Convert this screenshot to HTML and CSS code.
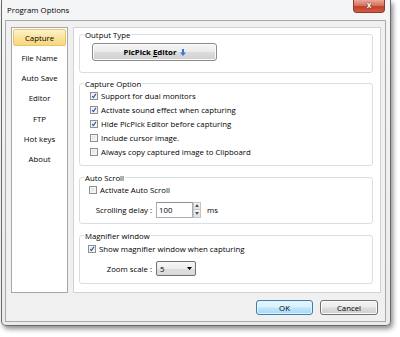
FILE: index.html
```html
<!DOCTYPE html>
<html>
<head>
<meta charset="utf-8">
<link rel="stylesheet" href="styles.css">
</head>
<body>
<div class="window">
  <div class="titlebar">
    <span class="title">Program Options</span>
    <div class="close"><span class="close-x">x</span></div>
  </div>
  <div class="client">
    <div class="main">
      <ul class="nav">
        <li class="nav-item active">Capture</li>
        <li class="nav-item">File Name</li>
        <li class="nav-item">Auto Save</li>
        <li class="nav-item">Editor</li>
        <li class="nav-item">FTP</li>
        <li class="nav-item">Hot keys</li>
        <li class="nav-item">About</li>
      </ul>
      <div class="panel">
        <fieldset class="group g-output">
          <legend>Output Type</legend>
          <button class="btn-editor"><span>PicPick <u>E</u>ditor</span><svg class="arrow" width="6" height="7" viewBox="0 0 6 7"><path d="M2 0h2v3.5h2L3 7 0 3.5h2z" fill="#3a78d8"/></svg></button>
        </fieldset>
        <fieldset class="group g-capture">
          <legend>Capture Option</legend>
          <div class="row"><span class="cb checked"><svg viewBox="0 0 8 8"><path d="M1.6 4.2l1.6 2L6.6 1.2" fill="none" stroke="#2b4ea8" stroke-width="1.4"/></svg></span>Support for dual monitors</div>
          <div class="row"><span class="cb checked"><svg viewBox="0 0 8 8"><path d="M1.6 4.2l1.6 2L6.6 1.2" fill="none" stroke="#2b4ea8" stroke-width="1.4"/></svg></span>Activate sound effect when capturing</div>
          <div class="row"><span class="cb checked"><svg viewBox="0 0 8 8"><path d="M1.6 4.2l1.6 2L6.6 1.2" fill="none" stroke="#2b4ea8" stroke-width="1.4"/></svg></span>Hide PicPick Editor before capturing</div>
          <div class="row"><span class="cb"></span>Include cursor image.</div>
          <div class="row"><span class="cb"></span>Always copy captured image to Clipboard</div>
        </fieldset>
        <fieldset class="group g-scroll">
          <legend>Auto Scroll</legend>
          <div class="row row-cb"><span class="cb"></span>Activate Auto Scroll</div>
          <div class="row row-field row-delay">
            <span class="flabel">Scrolling delay :</span>
            <span class="textbox">100</span>
            <span class="spin"><span class="spin-up"><svg width="4" height="3" viewBox="0 0 4 3"><path d="M0 3L2 0l2 3z" fill="#555"/></svg></span><span class="spin-down"><svg width="4" height="3" viewBox="0 0 4 3"><path d="M0 0h4L2 3z" fill="#555"/></svg></span></span>
            <span class="unit">ms</span>
          </div>
        </fieldset>
        <fieldset class="group g-mag">
          <legend>Magnifier window</legend>
          <div class="row row-cb2"><span class="cb checked"><svg viewBox="0 0 8 8"><path d="M1.6 4.2l1.6 2L6.6 1.2" fill="none" stroke="#2b4ea8" stroke-width="1.4"/></svg></span>Show magnifier window when capturing</div>
          <div class="row row-field row-zoom">
            <span class="flabel">Zoom scale :</span>
            <span class="select"><span>5</span><svg width="5" height="3" viewBox="0 0 5 3"><path d="M0 0h5L2.5 3z" fill="#000"/></svg></span>
          </div>
        </fieldset>
      </div>
    </div>
    <div class="footer">
      <button class="btn btn-ok">OK</button>
      <button class="btn">Cancel</button>
    </div>
  </div>
</div>
</body>
</html>
```
FILE: styles.css
```css
* { box-sizing: border-box; }
html, body { margin: 0; padding: 0; background: #fff; }
body {
  font-family: "Open Sans", "Noto Sans", sans-serif;
  font-size: 7.8px;
  color: #000;
  width: 400px;
  height: 337px;
  overflow: hidden;
}
.window {
  position: relative;
  margin-left: 1px;
  width: 390px;
  height: 326px;
  border: 1px solid #6a6a6a;
  border-top: none;
  border-radius: 0 0 5px 5px;
  background: linear-gradient(#f4f5f6, #e9eaeb);
  box-shadow: 2px 3px 5px rgba(0,0,0,0.45);
  padding: 0 4px 3px 3px;
  display: flex;
  flex-direction: column;
}
.titlebar {
  height: 20px;
  display: flex;
  align-items: center;
  padding-left: 2px;
}
.title { font-size: 7.8px; line-height: 10px; }
.close {
  position: absolute;
  top: 0;
  right: 5px;
  width: 32px;
  height: 13px;
  border: 1px solid #8f3b30;
  border-top: none;
  border-radius: 0 0 4px 4px;
  background: linear-gradient(#e9a99b 0%, #d6735f 45%, #c2412c 55%, #cf5f43 100%);
  display: flex;
  align-items: center;
  justify-content: center;
}
.close-x {
  color: #fff;
  font-weight: bold;
  font-size: 8px;
  line-height: 8px;
  margin-top: -2px;
  text-shadow: 0 0 1px #5a1a10, 0 0 1px #5a1a10;
}
.client {
  flex: 1;
  border: 1px solid #a9a9a9;
  background: #f0f0f0;
  display: flex;
  flex-direction: column;
  padding: 6px 0 0 5px;
}
.main {
  height: 266px;
  display: flex;
  gap: 5px;
}
.nav {
  list-style: none;
  margin: 0;
  width: 57px;
  border: 1px solid #a7a7a7;
  background: #fff;
  padding: 1px;
  display: flex;
  flex-direction: column;
  gap: 3.3px;
}
.nav-item {
  height: 17px;
  display: flex;
  align-items: center;
  justify-content: center;
  line-height: 10px;
}
.nav-item.active {
  background: linear-gradient(#fdf3cf, #fbe39c 50%, #f8d67a);
  border: 1px solid #e6c66c;
  border-radius: 2px;
}
.panel {
  width: 308px;
  border: 1px solid #d2d2d2;
  background: #fff;
  padding: 1.5px 7px 0 5px;
  display: flex;
  flex-direction: column;
}
.group {
  margin: 0;
  border: 1px solid #d5dfe5;
  border-radius: 3px;
  padding: 0 0 0 10px;
  min-width: 0;
}
.group legend {
  margin-left: -6px;
  padding: 0 1px;
  line-height: 10px;
  font-size: 7.8px;
  color: #000;
}
.g-output { padding-top: 3.5px; padding-bottom: 10.5px; }
.g-capture { margin-top: 6px; padding-top: 0.5px; padding-bottom: 6px; }
.g-scroll { margin-top: 6.5px; padding-top: 0.5px; padding-bottom: 5px; }
.g-mag { margin-top: 7px; padding-top: 1.5px; padding-bottom: 6.5px; }
.row {
  height: 14px;
  display: flex;
  align-items: center;
  line-height: 10px;
  white-space: nowrap;
}
.row-cb { margin-left: -1px; }
.row-cb2 { margin-left: -2px; }
.cb {
  width: 8px;
  height: 8px;
  border: 1px solid #8e8f8f;
  background: linear-gradient(135deg, #dcdcdc, #fbfbfb);
  box-shadow: inset 0 0 0 1px #f4f4f4;
  margin-right: 3px;
  flex: none;
  display: flex;
}
.cb svg { width: 6px; height: 6px; }
.cb.checked { background: linear-gradient(135deg, #e2e6ee, #fbfbfb); }
.btn-editor {
  margin: 0 0 0 2px;
  width: 125px;
  height: 18px;
  border: 1px solid #8b8b8b;
  border-radius: 3px;
  background: linear-gradient(#f6f6f6, #ebebeb 48%, #dddddd 52%, #cfcfcf);
  box-shadow: inset 0 0 0 1px #fbfbfb;
  font-family: inherit;
  font-size: 7.8px;
  font-weight: bold;
  color: #000;
  display: flex;
  align-items: center;
  justify-content: center;
  gap: 4px;
  padding: 0 0 0 1px;
}
.btn-editor u { text-decoration-thickness: 1px; text-underline-offset: 1px; }
.arrow { display: block; }
.row-field { gap: 0; }
.row-delay { height: 16px; margin-top: 4.5px; }
.row-zoom { height: 15px; margin-top: 5px; }
.flabel {
  width: 62px;
  text-align: right;
  margin-right: 4px;
}
.textbox {
  width: 37px;
  height: 16px;
  border: 1px solid #abadb3;
  border-top-color: #8d8f96;
  background: #fff;
  padding-left: 2px;
  display: flex;
  align-items: center;
}
.spin {
  width: 8px;
  height: 16px;
  display: flex;
  flex-direction: column;
  margin-right: 6px;
}
.spin-up, .spin-down {
  flex: 1;
  border: 1px solid #c4c4c4;
  background: linear-gradient(#f5f5f5, #e2e2e2);
  display: flex;
  align-items: center;
  justify-content: center;
}
.spin-down { border-top: none; }
.spin svg { display: block; }
.select {
  width: 40px;
  height: 15px;
  border: 1px solid #707070;
  border-radius: 2px;
  background: linear-gradient(#f7f7f7, #ededed 50%, #dedede 52%, #d9d9d9);
  display: flex;
  align-items: center;
  justify-content: space-between;
  padding: 0 3px 0 3px;
}
.select svg { display: block; }
.footer {
  display: flex;
  justify-content: flex-end;
  gap: 7px;
  padding: 7px 7px 0 0;
}
.btn {
  width: 58px;
  height: 15px;
  border: 1px solid #707070;
  border-radius: 3px;
  background: linear-gradient(#f3f3f3, #ebebeb 48%, #dddddd 52%, #cfcfcf);
  box-shadow: inset 0 0 0 1px #fbfbfb;
  font-family: inherit;
  font-size: 7.8px;
  color: #000;
  padding: 0;
  line-height: 10px;
}
.btn-ok {
  width: 57px;
  border-color: #3c7fb1;
  background: linear-gradient(#eaf6fd, #d9f0fc 48%, #bee6fd 52%, #a7d9f5);
  box-shadow: inset 0 0 0 1px #dff2fc;
}
```
